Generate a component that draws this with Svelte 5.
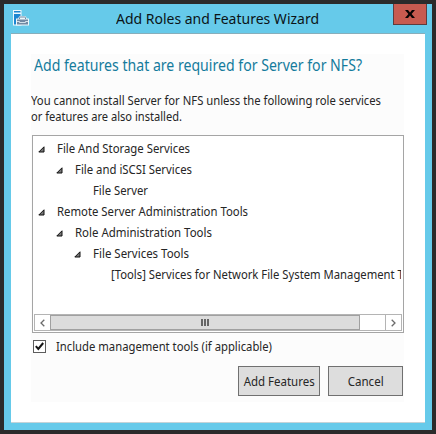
<script>
  const rows = [
    { level: 0, open: true, label: 'File And Storage Services', width: 133 },
    { level: 1, open: true, label: 'File and iSCSI Services', width: 117 },
    { level: 2, open: false, label: 'File Server', width: 55 },
    { level: 0, open: true, label: 'Remote Server Administration Tools', width: 191 },
    { level: 1, open: true, label: 'Role Administration Tools', width: 137 },
    { level: 2, open: true, label: 'File Services Tools', width: 96 },
    { level: 3, open: false, label: '[Tools] Services for Network File System Management Tools', width: 314 }
  ];

  // Condenses a label so that it fills the given width.
  function fit(node, width) {
    node.style.transform = `scaleX(${width / node.getBoundingClientRect().width})`;
  }
</script>

<div class="desktop">
  <div class="window">
    <header>
      <svg class="logo" width="18" height="18" viewBox="0 0 18 18">
        <path d="M1 1h8.500v15.500H1z" fill="#eef8fc" />
        <path d="M2 2h6.500v1.500H2zM2 5h6.500v10.500H2z" fill="#1c86d1" />
        <path d="M4 9.500h2.200Q6.500 7 8.500 7h4q2 0 2.300 2.500H17v7H4z" fill="#eef8fc" />
        <path d="M5 10.500h11v5H5z" fill="#7189a3" />
        <path d="M7.500 10V9q0-1 1-1h4q1 0 1 1v1" fill="none" stroke="#7189a3" />
        <path d="M5 12.500h2.500v1h6v-1H16" fill="none" stroke="#eef8fc" stroke-width=".8" />
      </svg>
      <div class="title"><span use:fit={203}>Add Roles and Features Wizard</span></div>
      <button class="close" aria-label="Close">
        <svg width="10" height="8" viewBox="0 0 10 8">
          <path d="M0 0h3l2 2.500L7 0h3L6.600 4 10 8H7L5 5.500 3 8H0l3.400-4z" fill="#080404" />
        </svg>
      </button>
    </header>

    <main>
      <div class="panel">
        <h1><span use:fit={328}>Add features that are required for Server for NFS?</span></h1>
        <div class="message">
          <div><span use:fit={350}>You cannot install Server for NFS unless the following role services</span></div>
          <div><span use:fit={151}>or features are also installed.</span></div>
        </div>

        <div class="tree">
          <div class="rows">
            {#each rows as row}
              <div class="row" style="padding-left: {row.level * 18}px">
                <span class="arrow">
                  {#if row.open}
                    <svg width="7" height="7" viewBox="0 0 7 7">
                      <path d="M6 .8V6H.8z" fill="#777" stroke="#111" />
                    </svg>
                  {/if}
                </span>
                <span class="label" use:fit={row.width}>{row.label}</span>
              </div>
            {/each}
          </div>
          <div class="scrollbar">
            <div class="step left">
              <svg width="5" height="8" viewBox="0 0 5 8"><path d="M4.300.7 1 4l3.300 3.300" /></svg>
            </div>
            <div class="thumb"><i></i><i></i><i></i></div>
            <div class="step right">
              <svg width="5" height="8" viewBox="0 0 5 8"><path d="M.7.7 4 4 .7 7.300" /></svg>
            </div>
          </div>
        </div>

        <div class="option">
          <span class="box">
            <svg width="9" height="9" viewBox="0 0 9 9">
              <path d="M.8 4.200 3.300 7 8.200 1" fill="none" stroke="#151515" stroke-width="2" />
            </svg>
          </span>
          <span class="label" use:fit={216}>Include management tools (if applicable)</span>
        </div>

        <div class="actions">
          <button class="add"><span use:fit={71}>Add Features</span></button>
          <button class="cancel"><span use:fit={36}>Cancel</span></button>
        </div>
      </div>
    </main>
  </div>
</div>

<style>
  :global(body) {
    margin: 0;
  }
  .desktop {
    box-sizing: border-box;
    width: 436px;
    height: 434px;
    padding: 4px;
    background: #2b2b2b;
    overflow: hidden;
    font: 12px/16px 'Noto Sans', 'Open Sans', sans-serif;
    color: #262626;
    white-space: nowrap;
  }
  .window {
    box-sizing: border-box;
    width: 428px;
    height: 426px;
    padding: 0 7px 7px;
    background: #66caea;
  }
  header {
    display: flex;
    height: 29px;
  }
  .logo {
    flex: none;
    margin: 5px 0 0 1px;
  }
  .title {
    flex: 1;
    min-width: 0;
    padding-left: 86px;
    font-size: 14.500px;
    line-height: 29px;
    color: #0b1417;
  }
  .title span,
  h1 span,
  .message span,
  .label {
    display: inline-block;
    flex: none;
    transform-origin: 0 50%;
  }
  button {
    box-sizing: border-box;
    display: flex;
    align-items: center;
    justify-content: center;
    padding: 0;
    font: inherit;
    color: inherit;
    border-radius: 0;
  }
  .close {
    flex: none;
    width: 34px;
    height: 21px;
    margin-right: -2px;
    border: 1px solid #5e3c3e;
    border-top: 0;
    background: #c75b50;
  }
  main {
    box-sizing: border-box;
    height: 390px;
    padding: 20px 21px 0 20px;
    border-top: 1px solid #87aebb;
    border-bottom: 1px solid #c4d3d8;
    background: #fff;
  }
  .panel {
    height: 348px;
    padding-left: 1px;
    background: #fcfcfc;
  }
  h1 {
    margin: 0;
    height: 39px;
    padding-left: 2px;
    font-size: 15.500px;
    font-weight: 400;
    line-height: 22px;
    color: #147b9c;
  }
  .message {
    height: 42px;
    margin-left: -1px;
  }
  .message div {
    height: 16px;
  }
  .tree {
    box-sizing: border-box;
    width: 372px;
    height: 198px;
    padding: 3px 1px 1px;
    border: 1px solid #a5a5a5;
    background: #fff;
  }
  .rows {
    height: 175px;
    width: 367px;
    overflow: hidden;
  }
  .row {
    display: flex;
    height: 21px;
    line-height: 20px;
  }
  .arrow {
    flex: none;
    width: 19px;
    padding-left: 4px;
    line-height: 0;
  }
  .arrow svg {
    margin-top: 7px;
  }
  .scrollbar {
    box-sizing: border-box;
    display: flex;
    height: 17px;
    border: 1px solid #b4b4b4;
  }
  .step {
    display: flex;
    align-items: center;
    justify-content: center;
    width: 15px;
  }
  .step path {
    fill: none;
    stroke: #6b6b6b;
    stroke-width: 1.300;
  }
  .right {
    margin-left: auto;
    border-left: 1px solid #b4b4b4;
  }
  .thumb {
    box-sizing: border-box;
    display: flex;
    align-items: center;
    justify-content: center;
    gap: 1px;
    width: 310px;
    border: 1px solid #a0a0a0;
    background: #dcdcdc;
  }
  .thumb i {
    width: 2px;
    height: 7px;
    background: #666;
  }
  .option {
    display: flex;
    height: 33px;
    line-height: 28px;
  }
  .box {
    box-sizing: border-box;
    display: flex;
    flex: none;
    align-items: center;
    justify-content: center;
    width: 13px;
    height: 13px;
    margin: 7px 10px 0 1px;
    border: 1px solid #5c5c5c;
    background: #fff;
  }
  .actions {
    display: flex;
    justify-content: flex-end;
    gap: 8px;
    padding-right: 1px;
  }
  .actions button {
    height: 30px;
    padding-top: 1px;
    border: 1px solid #707070;
    background: #ddd;
  }
  .add {
    width: 82px;
  }
  .cancel {
    width: 75px;
  }
</style>
